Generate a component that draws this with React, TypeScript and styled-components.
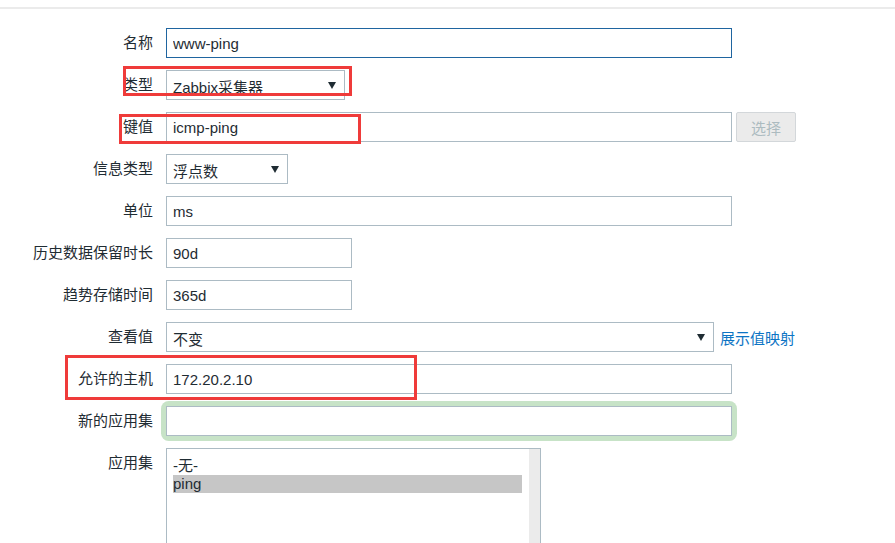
import styled, { createGlobalStyle } from "styled-components";

const GlobalStyle = createGlobalStyle`
  html, body {
    margin: 0;
    background: #ffffff;
  }
  body {
    font-family: "Liberation Sans", Arial, "Noto Sans CJK SC", sans-serif;
    font-size: 15px;
    color: #1f2c33;
  }
`;

const Page = styled.div`
  position: relative;
  width: 895px;
  height: 543px;
  overflow: hidden;
`;

const TopRule = styled.div`
  margin-top: 7px;
  height: 2px;
  background: #ebebeb;
`;

const Form = styled.div`
  display: grid;
  grid-template-columns: 153px auto;
  column-gap: 13px;
  row-gap: 12px;
  padding-top: 19px;
  align-items: center;
`;

const Label = styled.label<{ $top?: boolean }>`
  text-align: right;
  font-size: 15px;
  line-height: 18px;
  color: #1f2c33;
  white-space: nowrap;
  align-self: ${(p) => (p.$top ? "start" : "center")};
  padding-top: ${(p) => (p.$top ? "6px" : "0")};
`;

const Field = styled.div`
  display: flex;
  align-items: center;
  gap: 4px;
`;

const TextInput = styled.input<{ $width: number; $focused?: boolean }>`
  box-sizing: border-box;
  width: ${(p) => p.$width}px;
  height: 30px;
  padding: 0 6px;
  border: 1px solid ${(p) => (p.$focused ? "#1f65a0" : "#acbbc4")};
  background: #ffffff;
  font-family: "Liberation Sans", Arial, "Noto Sans CJK SC", sans-serif;
  font-size: 15px;
  color: #1f2c33;
  outline: none;
`;

const GlowWrap = styled.div`
  border-radius: 3px;
  box-shadow: 0 0 0 5px #c7e3c7;
`;

const Select = styled.div<{ $width: number }>`
  box-sizing: border-box;
  width: ${(p) => p.$width}px;
  height: 30px;
  display: flex;
  align-items: center;
  justify-content: space-between;
  padding: 2px 8px 0 6px;
  border: 1px solid #acbbc4;
  background: #ffffff;
  font-size: 15px;
  color: #1f2c33;
`;

const Arrow = styled.span`
  width: 0;
  height: 0;
  margin-bottom: 2px;
  border-left: 4px solid transparent;
  border-right: 4px solid transparent;
  border-top: 7px solid #1f2c33;
`;

const Button = styled.button`
  box-sizing: border-box;
  width: 60px;
  height: 30px;
  border: 1px solid #d3d7da;
  border-radius: 2px;
  background: #ebebeb;
  color: #acbbc0;
  font-family: "Liberation Sans", Arial, "Noto Sans CJK SC", sans-serif;
  font-size: 15px;
  padding: 0;
`;

const Link = styled.a`
  margin-left: 2px;
  color: #0c74c4;
  font-size: 15px;
  text-decoration: none;
  white-space: nowrap;
`;

const Listbox = styled.div`
  box-sizing: border-box;
  width: 375px;
  height: 120px;
  display: flex;
  border: 1px solid #acbbc4;
  background: #ffffff;
`;

const Options = styled.div`
  flex: 1;
  padding: 8px 7px 0 6px;
`;

const Option = styled.div<{ $selected?: boolean }>`
  height: 18px;
  line-height: 18px;
  font-size: 15px;
  color: #1f2c33;
  background: ${(p) => (p.$selected ? "#c6c6c6" : "transparent")};
`;

const Scrollbar = styled.div`
  width: 11px;
  background: #ebebeb;
`;

const Highlight = styled.div<{ $x: number; $y: number; $w: number; $h: number }>`
  position: absolute;
  box-sizing: border-box;
  left: ${(p) => p.$x}px;
  top: ${(p) => p.$y}px;
  width: ${(p) => p.$w}px;
  height: ${(p) => p.$h}px;
  border: 3px solid #ef3b3a;
  pointer-events: none;
`;

export default function App() {
  return (
    <Page>
      <GlobalStyle />
      <TopRule />
      <Form>
        <Label>名称</Label>
        <Field>
          <TextInput $width={566} $focused readOnly value="www-ping" />
        </Field>

        <Label>类型</Label>
        <Field>
          <Select $width={179}>
            <span>Zabbix采集器</span>
            <Arrow />
          </Select>
        </Field>

        <Label>键值</Label>
        <Field>
          <TextInput $width={566} readOnly value="icmp-ping" />
          <Button type="button">选择</Button>
        </Field>

        <Label>信息类型</Label>
        <Field>
          <Select $width={122}>
            <span>浮点数</span>
            <Arrow />
          </Select>
        </Field>

        <Label>单位</Label>
        <Field>
          <TextInput $width={566} readOnly value="ms" />
        </Field>

        <Label>历史数据保留时长</Label>
        <Field>
          <TextInput $width={186} readOnly value="90d" />
        </Field>

        <Label>趋势存储时间</Label>
        <Field>
          <TextInput $width={186} readOnly value="365d" />
        </Field>

        <Label>查看值</Label>
        <Field>
          <Select $width={548}>
            <span>不变</span>
            <Arrow />
          </Select>
          <Link href="#">展示值映射</Link>
        </Field>

        <Label>允许的主机</Label>
        <Field>
          <TextInput $width={566} readOnly value="172.20.2.10" />
        </Field>

        <Label>新的应用集</Label>
        <Field>
          <GlowWrap>
            <TextInput $width={566} readOnly value="" />
          </GlowWrap>
        </Field>

        <Label $top>应用集</Label>
        <Field>
          <Listbox>
            <Options>
              <Option>-无-</Option>
              <Option $selected>ping</Option>
            </Options>
            <Scrollbar />
          </Listbox>
        </Field>
      </Form>

      <Highlight $x={123} $y={66} $w={229} $h={30} />
      <Highlight $x={119} $y={114} $w={242} $h={30} />
      <Highlight $x={65} $y={355} $w={352} $h={45} />
    </Page>
  );
}
